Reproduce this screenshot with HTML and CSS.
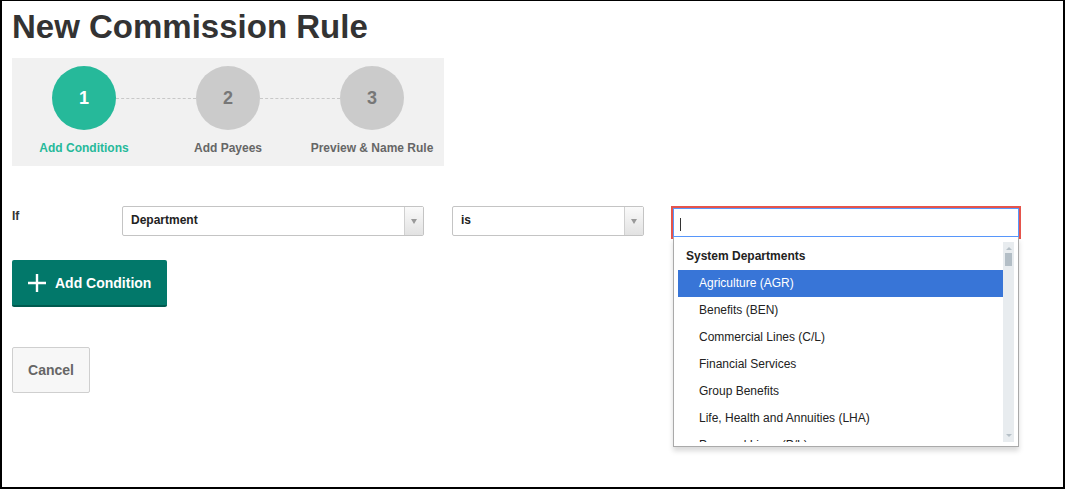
FILE: index.html
```html
<!DOCTYPE html>
<html lang="en">
<head>
  <meta charset="UTF-8">
  <meta name="viewport" content="width=device-width, initial-scale=1.0">
  <title>New Commission Rule</title>
  <link rel="stylesheet" href="styles.css">
</head>
<body>
  <div class="frame">
    <h1 class="page-title">New Commission Rule</h1>

    <!-- Wizard steps -->
    <div class="stepper">
      <div class="step active">
        <span class="step-num">1</span>
        <span class="step-label">Add Conditions</span>
      </div>
      <div class="step">
        <span class="step-num">2</span>
        <span class="step-label">Add Payees</span>
      </div>
      <div class="step">
        <span class="step-num">3</span>
        <span class="step-label">Preview &amp; Name Rule</span>
      </div>
    </div>

    <!-- Condition row -->
    <div class="condition-row">
      <label class="cond-label">If</label>
      <div class="select select-field">
        <span class="select-text">Department</span>
        <span class="select-arrow"><b></b></span>
      </div>
      <div class="select select-op">
        <span class="select-text">is</span>
        <span class="select-arrow"><b></b></span>
      </div>
      <div class="value-picker">
        <div class="search-box"><span class="caret"></span></div>
        <div class="dropdown">
          <div class="dropdown-list">
            <div class="group-label">System Departments</div>
            <ul class="options">
              <li class="highlighted">Agriculture (AGR)</li>
              <li>Benefits (BEN)</li>
              <li>Commercial Lines (C/L)</li>
              <li>Financial Services</li>
              <li>Group Benefits</li>
              <li>Life, Health and Annuities (LHA)</li>
              <li>Personal Lines (P/L)</li>
            </ul>
          </div>
          <div class="scrollbar">
            <span class="sb-up"></span>
            <span class="sb-thumb"></span>
            <span class="sb-down"></span>
          </div>
        </div>
      </div>
    </div>

    <button class="btn-add">
      <svg class="plus" width="18" height="18" viewBox="0 0 18 18">
        <path d="M9 0v18M0 9h18" stroke="#fff" stroke-width="2.4" fill="none"/>
      </svg>
      <span>Add Condition</span>
    </button>

    <div>
      <button class="btn-cancel">Cancel</button>
    </div>
  </div>
</body>
</html>
```

FILE: styles.css
```css
/* Base Styling */
* {
  margin: 0;
  padding: 0;
  box-sizing: border-box;
}

body {
  font-family: "Liberation Sans", Arial, sans-serif;
  background-color: #fff;
  color: #222;
}

.frame {
  height: 100vh;
  border: 2px solid #000;
  border-top-width: 1px;
  padding: 6px 10px 0;
}

/* Title */
.page-title {
  font-size: 33px;
  line-height: 40px;
  font-weight: bold;
  color: #333;
}

/* Stepper */
.stepper {
  margin-top: 11px;
  width: 432px;
  background-color: #f1f1f1;
  padding: 8px 0 11px;
  display: grid;
  grid-template-columns: repeat(3, 144px);
}

.step {
  position: relative;
  display: flex;
  flex-direction: column;
  align-items: center;
}

.step:not(:last-child)::after {
  content: '';
  position: absolute;
  top: 32px;
  left: 104px;
  width: 80px;
  border-top: 1px dashed #c8c8c8;
}

.step-num {
  width: 64px;
  height: 64px;
  border-radius: 50%;
  background-color: #cbcbcb;
  color: #777;
  font-size: 18px;
  font-weight: bold;
  display: flex;
  align-items: center;
  justify-content: center;
}

.step-label {
  margin-top: 11px;
  font-size: 12px;
  line-height: 14px;
  font-weight: bold;
  color: #666;
}

.step.active .step-num {
  background-color: #26b99a;
  color: #fff;
}

.step.active .step-label {
  color: #26b99a;
}

/* Condition row */
.condition-row {
  margin-top: 40px;
  display: flex;
  align-items: flex-start;
}

.cond-label {
  width: 110px;
  padding-top: 3px;
  font-size: 12px;
  line-height: 15px;
  font-weight: bold;
  color: #333;
}

.select {
  height: 30px;
  display: flex;
  border: 1px solid #c4c4c4;
  border-radius: 2px;
  background-color: #fff;
}

.select-field {
  width: 302px;
}

.select-op {
  width: 192px;
  margin-left: 28px;
}

.select-text {
  flex: 1;
  padding-left: 8px;
  font-size: 12px;
  line-height: 26px;
  font-weight: bold;
  color: #222;
}

.select-arrow {
  width: 19px;
  border-left: 1px solid #d0d0d0;
  background: linear-gradient(#fafafa, #e2e2e2);
  display: flex;
  align-items: center;
  justify-content: center;
}

.select-arrow b {
  width: 0;
  height: 0;
  border-left: 3px solid transparent;
  border-right: 3px solid transparent;
  border-top: 5px solid #999;
}

/* Value picker */
.value-picker {
  position: relative;
  width: 350px;
  margin-left: 27px;
  border: 2px solid #e5544b;
}

.search-box {
  height: 29px;
  border: 1px solid #5897fb;
  padding: 9px 0 0 6px;
}

.caret {
  display: block;
  width: 1px;
  height: 13px;
  background-color: #333;
}

.dropdown {
  position: absolute;
  top: 29px;
  left: 0;
  right: 0;
  height: 210px;
  background-color: #fff;
  border: 1px solid #aaa;
  border-top: none;
  box-shadow: 0 4px 5px rgba(0, 0, 0, 0.15);
  padding: 5px 4px 3px 4px;
  display: flex;
  z-index: 10;
}

.dropdown-list {
  flex: 1;
  height: 200px;
  overflow: hidden;
}

.group-label {
  height: 28px;
  padding: 7px 0 0 8px;
  font-size: 12px;
  line-height: 14px;
  font-weight: bold;
  color: #222;
}

.options {
  list-style: none;
}

.options li {
  height: 27px;
  padding-left: 21px;
  font-size: 12px;
  line-height: 27px;
  color: #222;
  white-space: nowrap;
}

.options li.highlighted {
  background-color: #3875d7;
  color: #fff;
}

/* Fake scrollbar */
.scrollbar {
  width: 11px;
  height: 200px;
  background-color: #e8ecef;
  display: flex;
  flex-direction: column;
  align-items: center;
  padding: 5px 0;
}

.sb-up,
.sb-down {
  width: 0;
  height: 0;
  border-left: 3px solid transparent;
  border-right: 3px solid transparent;
}

.sb-up {
  border-bottom: 3px solid #b6c0c7;
}

.sb-down {
  margin-top: auto;
  border-top: 3px solid #b6c0c7;
}

.sb-thumb {
  margin-top: 3px;
  width: 7px;
  height: 13px;
  background-color: #b3bec6;
}

/* Buttons */
.btn-add {
  margin-top: 21px;
  height: 47px;
  display: flex;
  align-items: center;
  gap: 9px;
  padding: 0 16px;
  background-color: #02786a;
  border: none;
  border-bottom: 2px solid #005a4f;
  border-radius: 2px;
  color: #fff;
  font-family: inherit;
  font-size: 14px;
  font-weight: bold;
  white-space: nowrap;
  cursor: pointer;
}

.btn-cancel {
  margin-top: 40px;
  width: 78px;
  height: 46px;
  background-color: #f7f7f7;
  border: 1px solid #cfcfcf;
  border-radius: 2px;
  color: #666;
  font-family: inherit;
  font-size: 14px;
  font-weight: bold;
  cursor: pointer;
}
```
